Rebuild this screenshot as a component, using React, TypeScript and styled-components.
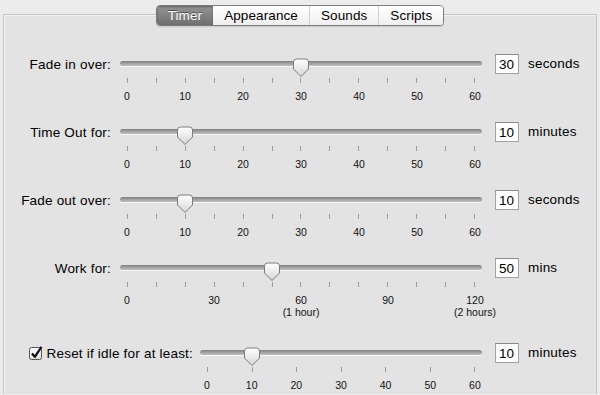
import { useState } from 'react';
import styled, { createGlobalStyle } from 'styled-components';

const GlobalStyle = createGlobalStyle`
  html, body {
    margin: 0;
    padding: 0;
    background: #ececec;
  }
  body {
    font-family: "Liberation Sans", Arial, sans-serif;
    font-size: 13px;
    color: #000;
  }
`;

const Window = styled.div`
  width: 600px;
  height: 395px;
  overflow: hidden;
  box-sizing: border-box;
  padding-top: 5px;
  background: #ececec;
`;

const TabBar = styled.div`
  display: flex;
  justify-content: center;
  position: relative;
  z-index: 1;
  margin-bottom: -12px;
`;

const TabGroup = styled.div`
  display: flex;
  border: 1px solid #7d7d7d;
  border-radius: 4px;
  overflow: hidden;
  box-shadow: 0 1px 1px rgba(0, 0, 0, 0.12);
`;

const Tab = styled.div<{ $active?: boolean; $divider?: boolean }>`
  height: 19px;
  line-height: 19px;
  padding: 0 11px;
  font-size: 13.5px;
  letter-spacing: 0.1px;
  cursor: default;
  color: ${(p) => (p.$active ? '#fff' : '#000')};
  text-shadow: ${(p) => (p.$active ? '0 -1px 0 rgba(0,0,0,0.45)' : 'none')};
  background: ${(p) =>
    p.$active ? 'linear-gradient(#949494, #6f6f6f)' : 'linear-gradient(#ffffff, #efefef)'};
  border-left: ${(p) => (p.$divider ? '1px solid #cfcfcf' : '0')};
  box-shadow: ${(p) => (p.$active ? 'inset 0 1px 2px rgba(0,0,0,0.35)' : 'none')};
`;

const Panel = styled.div`
  margin: 0 3px;
  height: 380px;
  box-sizing: border-box;
  border: 1px solid #c4c4c4;
  border-bottom: 0;
  background: #e3e3e3;
  box-shadow: inset 1px 1px 0 #f2f2f2;
  padding-top: 38px;
  display: flex;
  flex-direction: column;
  gap: 19px;
`;

const Row = styled.div<{ $extra?: number }>`
  display: flex;
  align-items: flex-start;
  margin-top: ${(p) => p.$extra ?? 0}px;
`;

const Label = styled.label<{ $width: number }>`
  width: ${(p) => p.$width}px;
  height: 22px;
  display: flex;
  align-items: center;
  justify-content: flex-end;
  gap: 4px;
  white-space: nowrap;
  font-size: 13.5px;
  letter-spacing: 0.2px;
`;

const SliderBox = styled.div<{ $width: number; $gap: number }>`
  width: ${(p) => p.$width}px;
  margin-left: ${(p) => p.$gap}px;
`;

const TrackLine = styled.div`
  position: relative;
  height: 22px;
  box-sizing: border-box;
  padding-top: 8px;
`;

const Groove = styled.div`
  height: 5px;
  border-radius: 3px;
  background: linear-gradient(#7f7f7f, #a9a9a9 60%, #bdbdbd);
  box-shadow: 0 1px 0 rgba(255, 255, 255, 0.7);
`;

const Thumb = styled.svg`
  position: absolute;
  top: 5px;
  width: 18px;
  height: 20px;
  transform: translateX(-50%);
`;

const TickRow = styled.div`
  display: flex;
  justify-content: space-between;
  padding: 0 7px;
  margin-top: 3px;
`;

const Tick = styled.span`
  width: 1px;
  height: 5px;
  background: #9c9c9c;
`;

const ScaleRow = styled.div`
  display: flex;
  justify-content: space-between;
  padding: 0 7px;
  margin-top: 7px;
`;

const ScaleMark = styled.div`
  width: 0;
  display: flex;
  flex-direction: column;
  align-items: center;
  font-size: 10.5px;
  line-height: 12px;
  white-space: nowrap;
  color: #111;
`;

const Field = styled.input`
  width: 24px;
  height: 20px;
  margin: 1px 0 0 13px;
  box-sizing: border-box;
  border: 1px solid #a2a2a2;
  border-top-color: #8a8a8a;
  background: #fff;
  padding: 0 0 0 3px;
  font-family: "Liberation Sans", Arial, sans-serif;
  font-size: 13.5px;
  color: #000;
  outline: none;
`;

const Unit = styled.span`
  margin-left: 9px;
  line-height: 22px;
  font-size: 13.5px;
  letter-spacing: 0.2px;
`;

const CheckBox = styled.svg`
  width: 14px;
  height: 14px;
  flex: none;
`;

interface Mark {
  text: string;
  sub?: string;
}

interface SliderSpec {
  label: string;
  value: number;
  max: number;
  ticks: number;
  marks: Mark[];
  unit: string;
  checkbox?: boolean;
}

const nums = (list: number[]): Mark[] => list.map((n) => ({ text: String(n) }));

const sliders: SliderSpec[] = [
  { label: 'Fade in over:', value: 30, max: 60, ticks: 13, marks: nums([0, 10, 20, 30, 40, 50, 60]), unit: 'seconds' },
  { label: 'Time Out for:', value: 10, max: 60, ticks: 13, marks: nums([0, 10, 20, 30, 40, 50, 60]), unit: 'minutes' },
  { label: 'Fade out over:', value: 10, max: 60, ticks: 13, marks: nums([0, 10, 20, 30, 40, 50, 60]), unit: 'seconds' },
  {
    label: 'Work for:',
    value: 50,
    max: 120,
    ticks: 13,
    marks: [{ text: '0' }, { text: '30' }, { text: '60', sub: '(1 hour)' }, { text: '90' }, { text: '120', sub: '(2 hours)' }],
    unit: 'mins',
  },
  {
    label: 'Reset if idle for at least:',
    value: 10,
    max: 60,
    ticks: 7,
    marks: nums([0, 10, 20, 30, 40, 50, 60]),
    unit: 'minutes',
    checkbox: true,
  },
];

const ThumbIcon = ({ left }: { left: string }) => (
  <Thumb viewBox="0 0 18 20" style={{ left }}>
    <defs>
      <linearGradient id="thumbFill" x1="0" y1="0" x2="0" y2="1">
        <stop offset="0" stopColor="#ffffff" />
        <stop offset="1" stopColor="#d6d6d6" />
      </linearGradient>
    </defs>
    <path
      d="M1.5 4 Q1.5 1 4.5 1 H13.5 Q16.5 1 16.5 4 V11 L9 18.5 L1.5 11 Z"
      fill="url(#thumbFill)"
      stroke="#7c7c7c"
      strokeWidth="1"
    />
  </Thumb>
);

const CheckIcon = () => (
  <CheckBox viewBox="0 0 14 14">
    <defs>
      <linearGradient id="boxFill" x1="0" y1="0" x2="0" y2="1">
        <stop offset="0" stopColor="#ffffff" />
        <stop offset="1" stopColor="#dedede" />
      </linearGradient>
    </defs>
    <rect x="0.5" y="1.5" width="12" height="12" rx="2" fill="url(#boxFill)" stroke="#555" />
    <path d="M3 7.5 L5.8 10.8 L12.5 0.8" fill="none" stroke="#111" strokeWidth="2.2" strokeLinejoin="round" />
  </CheckBox>
);

const SliderRow = ({ spec, extra }: { spec: SliderSpec; extra?: number }) => {
  const [value, setValue] = useState(spec.value);
  const frac = value / spec.max;
  const wide = !!spec.checkbox;

  return (
    <Row $extra={extra}>
      <Label $width={wide ? 189 : 107}>
        {spec.checkbox && <CheckIcon />}
        {spec.label}
      </Label>
      <SliderBox $width={wide ? 282 : 362} $gap={wide ? 7 : 9}>
        <TrackLine>
          <Groove />
          <ThumbIcon left={`calc(7px + (100% - 14px) * ${frac})`} />
        </TrackLine>
        <TickRow>
          {Array.from({ length: spec.ticks }, (_, i) => (
            <Tick key={i} />
          ))}
        </TickRow>
        <ScaleRow>
          {spec.marks.map((m) => (
            <ScaleMark key={m.text}>
              <span>{m.text}</span>
              {m.sub && <span>{m.sub}</span>}
            </ScaleMark>
          ))}
        </ScaleRow>
      </SliderBox>
      <Field value={value} onChange={(e) => setValue(Number(e.target.value) || 0)} />
      <Unit>{spec.unit}</Unit>
    </Row>
  );
};

const tabs = ['Timer', 'Appearance', 'Sounds', 'Scripts'];

export default function App() {
  const [active, setActive] = useState(0);

  return (
    <>
      <GlobalStyle />
      <Window>
        <TabBar>
          <TabGroup>
            {tabs.map((t, i) => (
              <Tab key={t} $active={i === active} $divider={i > 1} onClick={() => setActive(i)}>
                {t}
              </Tab>
            ))}
          </TabGroup>
        </TabBar>
        <Panel>
          {sliders.map((s, i) => (
            <SliderRow key={s.label} spec={s} extra={i === 4 ? 5 : 0} />
          ))}
        </Panel>
      </Window>
    </>
  );
}
